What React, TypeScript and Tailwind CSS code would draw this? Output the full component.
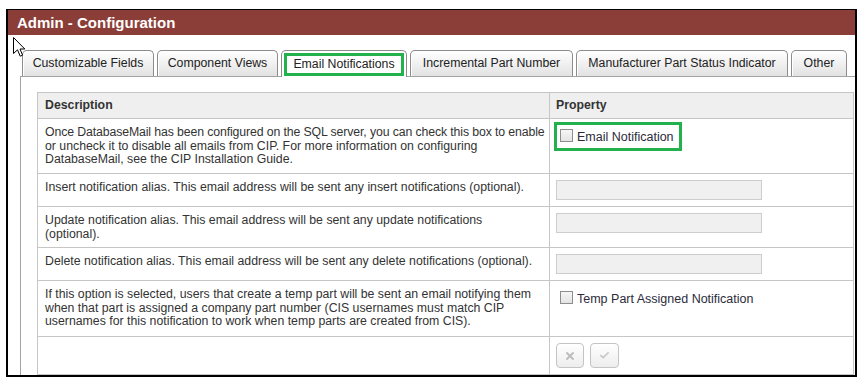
import { X, Check } from "lucide-react";

type TabProps = { label: string; width: string; active?: boolean };

const Tab = ({ label, width, active }: TabProps) => {
  if (active) {
    return (
      <div className={`relative z-10 -mb-px flex h-[27px] ${width} items-start rounded-t-[5px] border border-b-0 border-[#8c8c8c] bg-white px-[2px] pt-[2px]`}>
        {/* highlight box */}
        <div className="flex h-[23px] w-full items-center justify-center border-[3px] border-[#22b14c] text-[12.3px] text-[#222]">
          {label}
        </div>
      </div>
    );
  }
  return (
    <div className={`flex h-[26px] ${width} items-center justify-center rounded-t-[5px] border border-b-0 border-[#8c8c8c] bg-gradient-to-b from-white to-[#e2e2e2] text-[12.3px] text-[#222] shadow-[inset_1px_1px_0_#ffffff]`}>
      {label}
    </div>
  );
};

const FakeCheckbox = () => (
  <span className="mt-[4px] inline-block h-[13px] w-[13px] shrink-0 border border-[#8e8e8e] bg-gradient-to-b from-[#f6f6f6] to-[#e4e4e4]" />
);

const CheckRow = ({ label }: { label: string }) => (
  <div className="flex items-start gap-[4px] pl-[4px]">
    <FakeCheckbox />
    <span className="mt-[5px] text-[12.5px] leading-[15px] text-[#2b2b3b]">{label}</span>
  </div>
);

const TextBox = () => (
  <div className="h-[20px] w-[206px] border border-[#cdcdcd] bg-[#f0f0f0]" />
);

const Cell = ({ children }: { children: React.ReactNode }) => (
  <td className="whitespace-nowrap border border-[#c6c6c6] px-[7px] pb-[6px] pt-[7px] align-top leading-[13.5px]">{children}</td>
);

const PropCell = ({ children }: { children: React.ReactNode }) => (
  <td className="relative border border-[#c6c6c6] px-[6px] pb-[6px] pt-[6px] align-top">{children}</td>
);

export default function App() {
  return (
    <div className="relative h-[379px] w-[857px] overflow-hidden bg-white font-['Liberation_Sans',Arial,sans-serif] text-[12.3px] text-[#333]">
      <div className="ml-[6px] mt-[9px] h-[368px] w-[851px] overflow-hidden border-x-2 border-b-2 border-t border-black">
        <div className="h-[25px] bg-[#8b3d37] pl-[9px] text-[15px] font-bold leading-[25px] text-white">Admin - Configuration</div>

        <div className="ml-[12px] mt-[15px]">
          <div className="flex items-end gap-[3px] pl-[2px]">
            <Tab label="Customizable Fields" width="w-[132px]" />
            <Tab label="Component Views" width="w-[121px]" />
            <Tab label="Email Notifications" width="w-[126px]" active />
            <Tab label="Incremental Part Number" width="w-[163px]" />
            <Tab label="Manufacturer Part Status Indicator" width="w-[212px]" />
            <Tab label="Other" width="w-[56px]" />
          </div>

          <div className="w-[900px] border-l border-t border-[#a3a3a3] pl-[16px] pt-[15px]">
            <table className="w-[816px] table-fixed border-collapse border border-[#c6c6c6]">
              <colgroup>
                <col className="w-[512px]" />
                <col className="w-[304px]" />
              </colgroup>
              <thead>
                <tr className="h-[26px] bg-[#efefef]">
                  <th className="border border-[#c6c6c6] px-[7px] text-left font-bold">Description</th>
                  <th className="border border-[#c6c6c6] px-[6px] text-left font-bold">Property</th>
                </tr>
              </thead>
              <tbody>
                <tr className="h-[55px]">
                  <Cell>
                    <span className="tracking-[-0.12px]">
                      Once DatabaseMail has been configured on the SQL server, you can check this box to enable
                    </span>
                    <br />
                    or uncheck it to disable all emails from CIP. For more information on configuring
                    <br />
                    DatabaseMail, see the CIP Installation Guide.
                  </Cell>
                  <PropCell>
                    <CheckRow label="Email Notification" />
                    {/* highlight box */}
                    <div className="absolute left-[4px] top-[3px] h-[29px] w-[128px] border-[3px] border-[#22b14c]" />
                  </PropCell>
                </tr>
                <tr className="h-[33px]">
                  <Cell>Insert notification alias. This email address will be sent any insert notifications (optional).</Cell>
                  <PropCell>
                    <TextBox />
                  </PropCell>
                </tr>
                <tr className="h-[41px]">
                  <Cell>
                    Update notification alias. This email address will be sent any update notifications
                    <br />
                    (optional).
                  </Cell>
                  <PropCell>
                    <TextBox />
                  </PropCell>
                </tr>
                <tr className="h-[33px]">
                  <Cell>Delete notification alias. This email address will be sent any delete notifications (optional).</Cell>
                  <PropCell>
                    <TextBox />
                  </PropCell>
                </tr>
                <tr className="h-[56px]">
                  <Cell>
                    If this option is selected, users that create a temp part will be sent an email notifying them
                    <br />
                    when that part is assigned a company part number (CIS usernames must match CIP
                    <br />
                    usernames for this notification to work when temp parts are created from CIS).
                  </Cell>
                  <PropCell>
                    <CheckRow label="Temp Part Assigned Notification" />
                  </PropCell>
                </tr>
                <tr className="h-[37px]">
                  <Cell>{""}</Cell>
                  <PropCell>
                    <div className="flex gap-[6px]">
                      <div className="flex h-[25px] w-[28px] items-center justify-center rounded-[4px] border border-[#c4c4c4] bg-gradient-to-b from-white to-[#ededed]">
                        <X className="h-[12px] w-[12px] text-[#bdbdbd]" strokeWidth={4} />
                      </div>
                      <div className="flex h-[25px] w-[29px] items-center justify-center rounded-[4px] border border-[#c4c4c4] bg-gradient-to-b from-white to-[#ededed]">
                        <Check className="h-[11px] w-[11px] text-[#c4c4c4]" strokeWidth={3.5} />
                      </div>
                    </div>
                  </PropCell>
                </tr>
              </tbody>
            </table>
          </div>
        </div>
      </div>

      {/* mouse cursor */}
      <svg className="absolute left-[13px] top-[37px]" width="13" height="21" viewBox="0 0 13 21">
        <path d="M0.5 0.5 L0.5 16.5 L4.5 12.8 L7.2 19.2 L9.6 18.2 L7 12 L11.8 12 Z" fill="#fff" stroke="#000" strokeWidth="1" strokeLinejoin="round" />
      </svg>
    </div>
  );
}
